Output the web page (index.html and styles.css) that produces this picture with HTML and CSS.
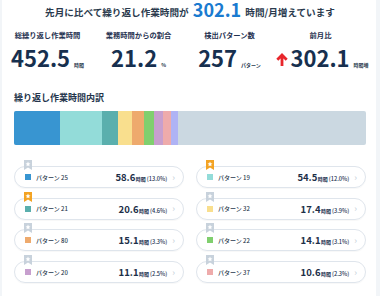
FILE: index.html
```html
<!DOCTYPE html>
<html lang="ja">
<head>
<meta charset="utf-8">
<link rel="stylesheet" href="styles.css">
</head>
<body>
<div class="card">
  <h1 class="headline">先月に比べて繰り返し作業時間が <span class="hl-num">302.1</span> 時間/月増えています</h1>
  <div class="stats">
    <div class="stat"><div class="stat-label">総繰り返し作業時間</div><div class="stat-value"><span class="num">452.5</span><span class="unit">時間</span></div></div>
    <div class="stat"><div class="stat-label">業務時間からの割合</div><div class="stat-value"><span class="num">21.2</span><span class="unit">%</span></div></div>
    <div class="stat"><div class="stat-label">検出パターン数</div><div class="stat-value"><span class="num">257</span><span class="unit">パターン</span></div></div>
    <div class="stat"><div class="stat-label">前月比</div><div class="stat-value"><svg class="arrow" viewBox="0 0 12 13" width="12" height="13"><path d="M6 2.2V13M1.3 6.8L6 2.1L10.7 6.8" fill="none" stroke="#e8262b" stroke-width="2.8" stroke-linejoin="miter"/></svg><span class="num">302.1</span><span class="unit">時間増</span></div></div>
  </div>
  <h2 class="section-title">繰り返し作業時間内訳</h2>
  <div class="bar">
    <div class="seg c1" style="width:13%"></div>
    <div class="seg c2" style="width:12%"></div>
    <div class="seg c3" style="width:4.6%"></div>
    <div class="seg c4" style="width:3.9%"></div>
    <div class="seg c5" style="width:3.3%"></div>
    <div class="seg c6" style="width:3.1%"></div>
    <div class="seg c7" style="width:2.5%"></div>
    <div class="seg c8" style="width:2.3%"></div>
    <div class="seg c9" style="width:2%"></div>
  </div>
  <div class="list">
    <div class="pill"><svg class="badge gray" viewBox="0 0 8 10"><path d="M0 0H8V10L4 7.6L0 10Z"/><path class="star" d="M4 1.6L4.75 3.3L6.5 3.45L5.15 4.6L5.55 6.35L4 5.4L2.45 6.35L2.85 4.6L1.5 3.45L3.25 3.3Z"/></svg><span class="sw c1"></span><span class="name">パターン 25</span><span class="val"><b>58.6</b><small>時間</small><i>(13.0%)</i></span><span class="chev">›</span></div>
    <div class="pill"><svg class="badge gold" viewBox="0 0 8 10"><path d="M0 0H8V10L4 7.6L0 10Z"/><path class="star" d="M4 1.6L4.75 3.3L6.5 3.45L5.15 4.6L5.55 6.35L4 5.4L2.45 6.35L2.85 4.6L1.5 3.45L3.25 3.3Z"/></svg><span class="sw c2"></span><span class="name">パターン 19</span><span class="val"><b>54.5</b><small>時間</small><i>(12.0%)</i></span><span class="chev">›</span></div>
    <div class="pill"><svg class="badge gold" viewBox="0 0 8 10"><path d="M0 0H8V10L4 7.6L0 10Z"/><path class="star" d="M4 1.6L4.75 3.3L6.5 3.45L5.15 4.6L5.55 6.35L4 5.4L2.45 6.35L2.85 4.6L1.5 3.45L3.25 3.3Z"/></svg><span class="sw c3"></span><span class="name">パターン 21</span><span class="val"><b>20.6</b><small>時間</small><i>(4.6%)</i></span><span class="chev">›</span></div>
    <div class="pill"><svg class="badge gray" viewBox="0 0 8 10"><path d="M0 0H8V10L4 7.6L0 10Z"/><path class="star" d="M4 1.6L4.75 3.3L6.5 3.45L5.15 4.6L5.55 6.35L4 5.4L2.45 6.35L2.85 4.6L1.5 3.45L3.25 3.3Z"/></svg><span class="sw c4"></span><span class="name">パターン 32</span><span class="val"><b>17.4</b><small>時間</small><i>(3.9%)</i></span><span class="chev">›</span></div>
    <div class="pill"><svg class="badge gray" viewBox="0 0 8 10"><path d="M0 0H8V10L4 7.6L0 10Z"/><path class="star" d="M4 1.6L4.75 3.3L6.5 3.45L5.15 4.6L5.55 6.35L4 5.4L2.45 6.35L2.85 4.6L1.5 3.45L3.25 3.3Z"/></svg><span class="sw c5"></span><span class="name">パターン 80</span><span class="val"><b>15.1</b><small>時間</small><i>(3.3%)</i></span><span class="chev">›</span></div>
    <div class="pill"><svg class="badge gray" viewBox="0 0 8 10"><path d="M0 0H8V10L4 7.6L0 10Z"/><path class="star" d="M4 1.6L4.75 3.3L6.5 3.45L5.15 4.6L5.55 6.35L4 5.4L2.45 6.35L2.85 4.6L1.5 3.45L3.25 3.3Z"/></svg><span class="sw c6"></span><span class="name">パターン 22</span><span class="val"><b>14.1</b><small>時間</small><i>(3.1%)</i></span><span class="chev">›</span></div>
    <div class="pill"><svg class="badge gray" viewBox="0 0 8 10"><path d="M0 0H8V10L4 7.6L0 10Z"/><path class="star" d="M4 1.6L4.75 3.3L6.5 3.45L5.15 4.6L5.55 6.35L4 5.4L2.45 6.35L2.85 4.6L1.5 3.45L3.25 3.3Z"/></svg><span class="sw c7"></span><span class="name">パターン 20</span><span class="val"><b>11.1</b><small>時間</small><i>(2.5%)</i></span><span class="chev">›</span></div>
    <div class="pill"><svg class="badge gray" viewBox="0 0 8 10"><path d="M0 0H8V10L4 7.6L0 10Z"/><path class="star" d="M4 1.6L4.75 3.3L6.5 3.45L5.15 4.6L5.55 6.35L4 5.4L2.45 6.35L2.85 4.6L1.5 3.45L3.25 3.3Z"/></svg><span class="sw c8"></span><span class="name">パターン 37</span><span class="val"><b>10.6</b><small>時間</small><i>(2.3%)</i></span><span class="chev">›</span></div>
  </div>
</div>
</body>
</html>
```
FILE: styles.css
```css
* { box-sizing: border-box; }
html, body { margin: 0; padding: 0; }
body {
  background: #f2f5f8;
  font-family: "Noto Sans CJK JP", "Noto Sans", sans-serif;
  color: #1c3150;
  width: 380px;
  height: 296px;
  overflow: hidden;
}
.card {
  margin-left: 2px;
  width: 374px;
  height: 296px;
  background: #fff;
  padding: 0 10px 0 12px;
}
.headline {
  margin: 0;
  height: 21px;
  padding-top: 0;
  font-size: 9.6px;
  font-weight: 700;
  color: #2b3b4e;
  text-align: center;
  line-height: 20px;
  white-space: nowrap;
}
.hl-num {
  font-size: 18px;
  line-height: 18px;
  color: #1a7bd0;
  vertical-align: -1px;
  margin: 0 2px;
}
.stats {
  margin: 9px 0 0 -12px;
  display: grid;
  grid-template-columns: repeat(4, 91px);
}
.stat { text-align: center; }
.stat-label {
  font-size: 7.3px;
  font-weight: 700;
  line-height: 10px;
  color: #1f3150;
  white-space: nowrap;
}
.stat-value {
  display: flex;
  justify-content: center;
  align-items: baseline;
  margin-top: 3px;
  height: 28px;
  white-space: nowrap;
}
.num {
  font-size: 22px;
  font-weight: 700;
  line-height: 28px;
  color: #17304f;
}
.unit {
  font-size: 5px;
  font-weight: 700;
  margin-left: 4px;
  color: #2a3b50;
  flex: none;
}
.arrow { align-self: center; margin-right: 2px; margin-top: 4px; flex: none; }
.stat:last-child .stat-value { padding-left: 4px; }
.section-title {
  margin: 21px 0 0;
  font-size: 9px;
  font-weight: 700;
  line-height: 12px;
  color: #24354c;
}
.bar {
  margin-top: 7px;
  height: 34px;
  width: 352px;
  border-radius: 2px;
  overflow: hidden;
  display: flex;
  background: #cbd8e1;
}
.seg { height: 100%; }
.c1 { background: #3895d1; }
.c2 { background: #93dcd9; }
.c3 { background: #5aafad; }
.c4 { background: #f9df8e; }
.c5 { background: #eeaa6d; }
.c6 { background: #80cf6e; }
.c7 { background: #c79fce; }
.c8 { background: #eeabab; }
.c9 { background: #afb3f5; }
.list {
  margin-top: 21px;
  width: 352px;
  display: grid;
  grid-template-columns: 170px 170px;
  column-gap: 12px;
  row-gap: 9.7px;
}
.pill {
  position: relative;
  height: 22px;
  border: 1px solid #dfe5ec;
  border-radius: 11px;
  display: flex;
  align-items: center;
  padding: 0 8px 0 10px;
  box-shadow: 0 1px 1px rgba(0,0,0,0.03);
}
.badge {
  position: absolute;
  left: 9px;
  top: -7px;
  width: 8px;
  height: 10px;
}
.badge.gray path { fill: #c8d2dc; }
.badge.gold path { fill: #f3a323; }
.badge path.star { fill: #fff; }
.sw {
  width: 6px;
  height: 6px;
  flex: none;
}
.name {
  margin-left: 5px;
  font-size: 6px;
  color: #2a3a4e;
  font-weight: 500;
}
.val {
  margin-left: auto;
  display: flex;
  align-items: baseline;
}
.val b {
  font-size: 9.5px;
  font-weight: 700;
  color: #1c2f48;
}
.val small {
  font-size: 5px;
  font-weight: 700;
  margin-left: 0.5px;
}
.val i {
  font-style: normal;
  font-size: 5.6px;
  font-weight: 500;
  margin-left: 1px;
}
.chev {
  margin-left: 5px;
  font-size: 9px;
  color: #c3ccd5;
  line-height: 1;
}
```
